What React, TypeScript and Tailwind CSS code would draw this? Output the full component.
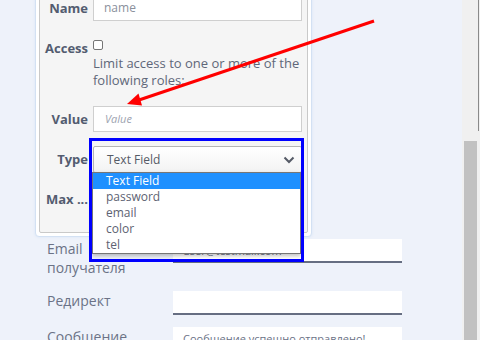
import React from "react";

const options = ["Text Field", "password", "email", "color", "tel"];

const Label = ({ children }: { children: React.ReactNode }) => (
  <span className="w-[47px] shrink-0 text-right text-[13px] font-bold leading-[17px] text-[#535c70]">
    {children}
  </span>
);

const FormRow = ({
  label,
  value,
  className = "",
}: {
  label: React.ReactNode;
  value?: string;
  className?: string;
}) => (
  <div className={`flex items-start ${className}`}>
    <span className="w-[126px] shrink-0 text-[14px] leading-[19px] text-[#6b7286]">
      {label}
    </span>
    <div className="flex h-[24px] w-[229px] items-center border-b-2 border-[#666e82] bg-white pl-[10px] pt-[3px] text-[11px] text-[#6b7286]">
      {value}
    </div>
  </div>
);

export default function App() {
  return (
    <div className="flex h-[340px] w-[480px] overflow-hidden bg-[#eef2fa] font-['Open_Sans',sans-serif]">
      <div className="relative w-[462px] shrink-0">
        {/* field settings popover */}
        <div className="-mt-[16px] ml-[35px] w-[277px] rounded-[4px] border border-[#d3e1f3] bg-white p-[3px] shadow-[0_0_3px_#d6e4f6]">
          <div className="rounded-[2px] border border-[#c9c9c9] bg-[#f5f5f5] pt-[6px] pb-[20px] pl-[1px]">
            <div className="flex items-center gap-[5px]">
              <Label>Name</Label>
              <div className="flex h-[26px] w-[209px] items-center border border-[#cfcfcf] bg-white pl-[10px] text-[12px] text-[#8a909c]">
                name
              </div>
            </div>

            <div className="mt-[19px] flex items-start gap-[5px]">
              <Label>Access</Label>
              <div className="w-[209px]">
                <div className="h-[15px]">
                  <span className="block h-[10px] w-[10px] rounded-[2px] border border-[#767676] bg-white" />
                </div>
                <p className="text-[13px] leading-[17px] text-[#5f6779]">
                  Limit access to one or more of the following roles:
                </p>
              </div>
            </div>

            <div className="mt-[17px] flex items-center gap-[5px]">
              <Label>Value</Label>
              <div className="flex h-[26px] w-[209px] items-center border border-[#cfcfcf] bg-white pl-[11px] text-[11px] italic text-[#9da3b0]">
                Value
              </div>
            </div>

            <div className="mt-[14px] flex items-center gap-[5px]">
              <Label>Type</Label>
              <div className="flex h-[27px] w-[209px] items-center justify-between rounded-[2px] border border-[#b5b5b5] bg-gradient-to-b from-white to-[#f3f3f3] pl-[13px] pr-[6px] text-[12px] text-[#555a66]">
                Text Field
                <svg width="12" height="8" viewBox="0 0 12 8">
                  <polyline points="1.5,1.5 6,6 10.5,1.5" fill="none" stroke="#555a66" strokeWidth="2" />
                </svg>
              </div>
            </div>

            <div className="mt-[13px] flex items-center gap-[5px]">
              <Label>Max ...</Label>
              <div className="h-[26px] w-[209px] border border-[#cfcfcf] bg-white" />
            </div>
          </div>
        </div>

        {/* form */}
        <div className="ml-[47px] mt-[2px]">
          <FormRow
            label={
              <>
                Email
                <br />
                получателя
              </>
            }
            value="user@testmail.com"
          />
          <FormRow label="Редирект" className="mt-[14px]" />
          <FormRow label="Сообщение" value="Сообщение успешно отправлено!" className="mt-[12px]" />
        </div>

        {/* open select list */}
        <ul className="absolute left-[92px] top-[172px] w-[209px] border border-[#767676] bg-white text-[12px] leading-[16px] text-[#5d6272] shadow-[0_2px_4px_rgba(0,0,0,0.25)]">
          {options.map((o, i) => (
            <li
              key={o}
              className={i === 0 ? "bg-[#1e90ff] pl-[13px] text-white" : "pl-[13px]"}
            >
              {o}
            </li>
          ))}
        </ul>

        {/* annotations */}
        <div className="absolute left-[89px] top-[138px] h-[124px] w-[215px] border-[3px] border-[#0000ff]" />
        <svg className="absolute left-0 top-0" width="462" height="340">
          <line x1="374" y1="21" x2="139" y2="100" stroke="#ff0000" strokeWidth="3" />
          <polygon points="127,104 142,105.5 138.5,93.5" fill="#ff0000" />
        </svg>
      </div>

      {/* scrollbar */}
      <div className="relative w-[18px] shrink-0 bg-[#f0f0f0]">
        <div className="absolute right-[1px] top-0 h-[131px] w-px bg-[#8a8a8a]" />
        <div className="ml-[2px] mt-[141px] h-[199px] w-[13px] bg-[#c1c1c1]" />
      </div>
    </div>
  );
}
